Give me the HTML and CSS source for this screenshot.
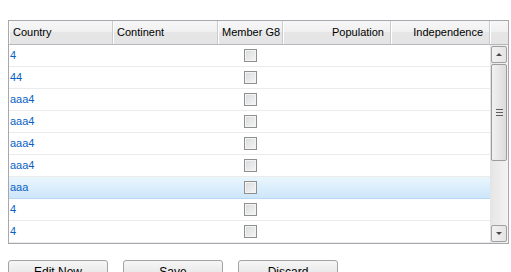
FILE: index.html
```html
<!DOCTYPE html>
<html lang="en">
<head>
  <meta charset="UTF-8">
  <title>Countries</title>
  <link rel="stylesheet" href="styles.css">
</head>
<body>
  <div class="page">
    <div class="grid">
      <div class="head">
        <div class="hcell c-country">Country</div>
        <div class="hcell c-continent">Continent</div>
        <div class="hcell c-member">Member G8</div>
        <div class="hcell c-pop right">Population</div>
        <div class="hcell c-ind right">Independence</div>
        <div class="hcell c-spacer"></div>
      </div>
      <div class="body">
        <div class="rows">
          <div class="row"><div class="cell c-country">4</div><div class="cell c-continent"></div><div class="cell c-member"><span class="check"></span></div><div class="cell c-pop"></div><div class="cell c-ind"></div></div>
          <div class="row"><div class="cell c-country">44</div><div class="cell c-continent"></div><div class="cell c-member"><span class="check"></span></div><div class="cell c-pop"></div><div class="cell c-ind"></div></div>
          <div class="row"><div class="cell c-country">aaa4</div><div class="cell c-continent"></div><div class="cell c-member"><span class="check"></span></div><div class="cell c-pop"></div><div class="cell c-ind"></div></div>
          <div class="row"><div class="cell c-country">aaa4</div><div class="cell c-continent"></div><div class="cell c-member"><span class="check"></span></div><div class="cell c-pop"></div><div class="cell c-ind"></div></div>
          <div class="row"><div class="cell c-country">aaa4</div><div class="cell c-continent"></div><div class="cell c-member"><span class="check"></span></div><div class="cell c-pop"></div><div class="cell c-ind"></div></div>
          <div class="row"><div class="cell c-country">aaa4</div><div class="cell c-continent"></div><div class="cell c-member"><span class="check"></span></div><div class="cell c-pop"></div><div class="cell c-ind"></div></div>
          <div class="row selected"><div class="cell c-country">aaa</div><div class="cell c-continent"></div><div class="cell c-member"><span class="check"></span></div><div class="cell c-pop"></div><div class="cell c-ind"></div></div>
          <div class="row"><div class="cell c-country">4</div><div class="cell c-continent"></div><div class="cell c-member"><span class="check"></span></div><div class="cell c-pop"></div><div class="cell c-ind"></div></div>
          <div class="row"><div class="cell c-country">4</div><div class="cell c-continent"></div><div class="cell c-member"><span class="check"></span></div><div class="cell c-pop"></div><div class="cell c-ind"></div></div>
        </div>
        <div class="scrollbar">
          <div class="sb-btn"><span class="arrow up"></span></div>
          <div class="sb-track">
            <div class="sb-thumb"><span class="grip"></span></div>
          </div>
          <div class="sb-btn"><span class="arrow down"></span></div>
        </div>
      </div>
    </div>

    <div class="buttons">
      <button class="btn">Edit New</button>
      <button class="btn">Save</button>
      <button class="btn">Discard</button>
    </div>
  </div>
</body>
</html>
```

FILE: styles.css
```css
body {
  margin: 0;
  background-color: #fff;
  font-family: "Liberation Sans", Arial, sans-serif;
  font-size: 11px;
  color: #000;
  overflow: hidden;
}

.page {
  padding: 20px 0 0 8px;
}

.grid {
  width: 499px;
  border: 1px solid #a5a9ae;
}

.head {
  display: flex;
  height: 23px;
  border-bottom: 1px solid #b5b9be;
  background: linear-gradient(#f7f7f7, #f1f1f1 45%, #e6e6e6 50%, #e4e4e4);
}

.hcell {
  box-sizing: border-box;
  height: 23px;
  line-height: 23px;
  padding: 0 5px 0 3px;
  border-right: 1px solid #c9cbce;
  border-left: 1px solid #fff;
  white-space: nowrap;
}

.hcell.right {
  text-align: right;
  padding-right: 6px;
}

.c-country { width: 104px; }
.c-continent { width: 105px; }
.c-member { width: 65px; }
.c-pop { width: 108px; }
.c-ind { width: 99px; }
.c-spacer { width: 18px; border-right: none; }

.body {
  display: flex;
}

.rows {
  width: 481px;
}

.row {
  display: flex;
  height: 21px;
  border-bottom: 1px solid #ebebeb;
}

.row.selected {
  background: linear-gradient(#eaf6fd, #dbeefc 50%, #cde6fa);
  border-bottom-color: #b9d8f5;
}

.cell {
  box-sizing: border-box;
  line-height: 21px;
  padding-left: 1px;
  color: #0b5fc4;
}

.cell.c-member {
  display: flex;
  align-items: center;
  justify-content: center;
  padding-left: 0;
}

.check {
  box-sizing: border-box;
  width: 13px;
  height: 13px;
  border: 1px solid #8e8f8f;
  background: linear-gradient(135deg, #d8dadc, #f6f6f6);
  box-shadow: inset 0 0 0 1px #f4f4f4;
}

.scrollbar {
  display: flex;
  flex-direction: column;
  width: 18px;
  border-left: 1px solid #e3e3e3;
  box-sizing: border-box;
  background: linear-gradient(90deg, #e6e6e6, #f3f3f3);
}

.sb-btn {
  box-sizing: border-box;
  height: 17px;
  margin: 1px 1px 1px 0;
  border: 1px solid #a0a0a0;
  border-radius: 2px;
  background: linear-gradient(90deg, #f2f2f2, #e4e4e4);
  display: flex;
  align-items: center;
  justify-content: center;
}

.arrow {
  width: 0;
  height: 0;
  border-left: 3px solid transparent;
  border-right: 3px solid transparent;
}

.arrow.up { border-bottom: 3px solid #4a4a4a; }
.arrow.down { border-top: 3px solid #4a4a4a; }

.sb-track {
  flex: 1;
  padding: 0 1px 0 0;
}

.sb-thumb {
  box-sizing: border-box;
  height: 97px;
  border: 1px solid #9c9c9c;
  border-radius: 2px;
  background: linear-gradient(90deg, #f1f1f1, #dcdcdc);
  display: flex;
  align-items: center;
  justify-content: center;
}

.grip {
  width: 7px;
  height: 7px;
  background: repeating-linear-gradient(#5e5e5e 0 1px, transparent 1px 3px);
}

.buttons {
  display: flex;
  gap: 15px;
  margin-top: 16px;
}

.btn {
  box-sizing: border-box;
  width: 100px;
  height: 24px;
  padding: 0;
  border: 1px solid #a3a3a3;
  border-radius: 3px;
  background: linear-gradient(#f6f6f6, #eaeaea 50%, #dcdcdc);
  font-family: "Liberation Sans", Arial, sans-serif;
  font-size: 12px;
  color: #000;
  cursor: pointer;
}
```
